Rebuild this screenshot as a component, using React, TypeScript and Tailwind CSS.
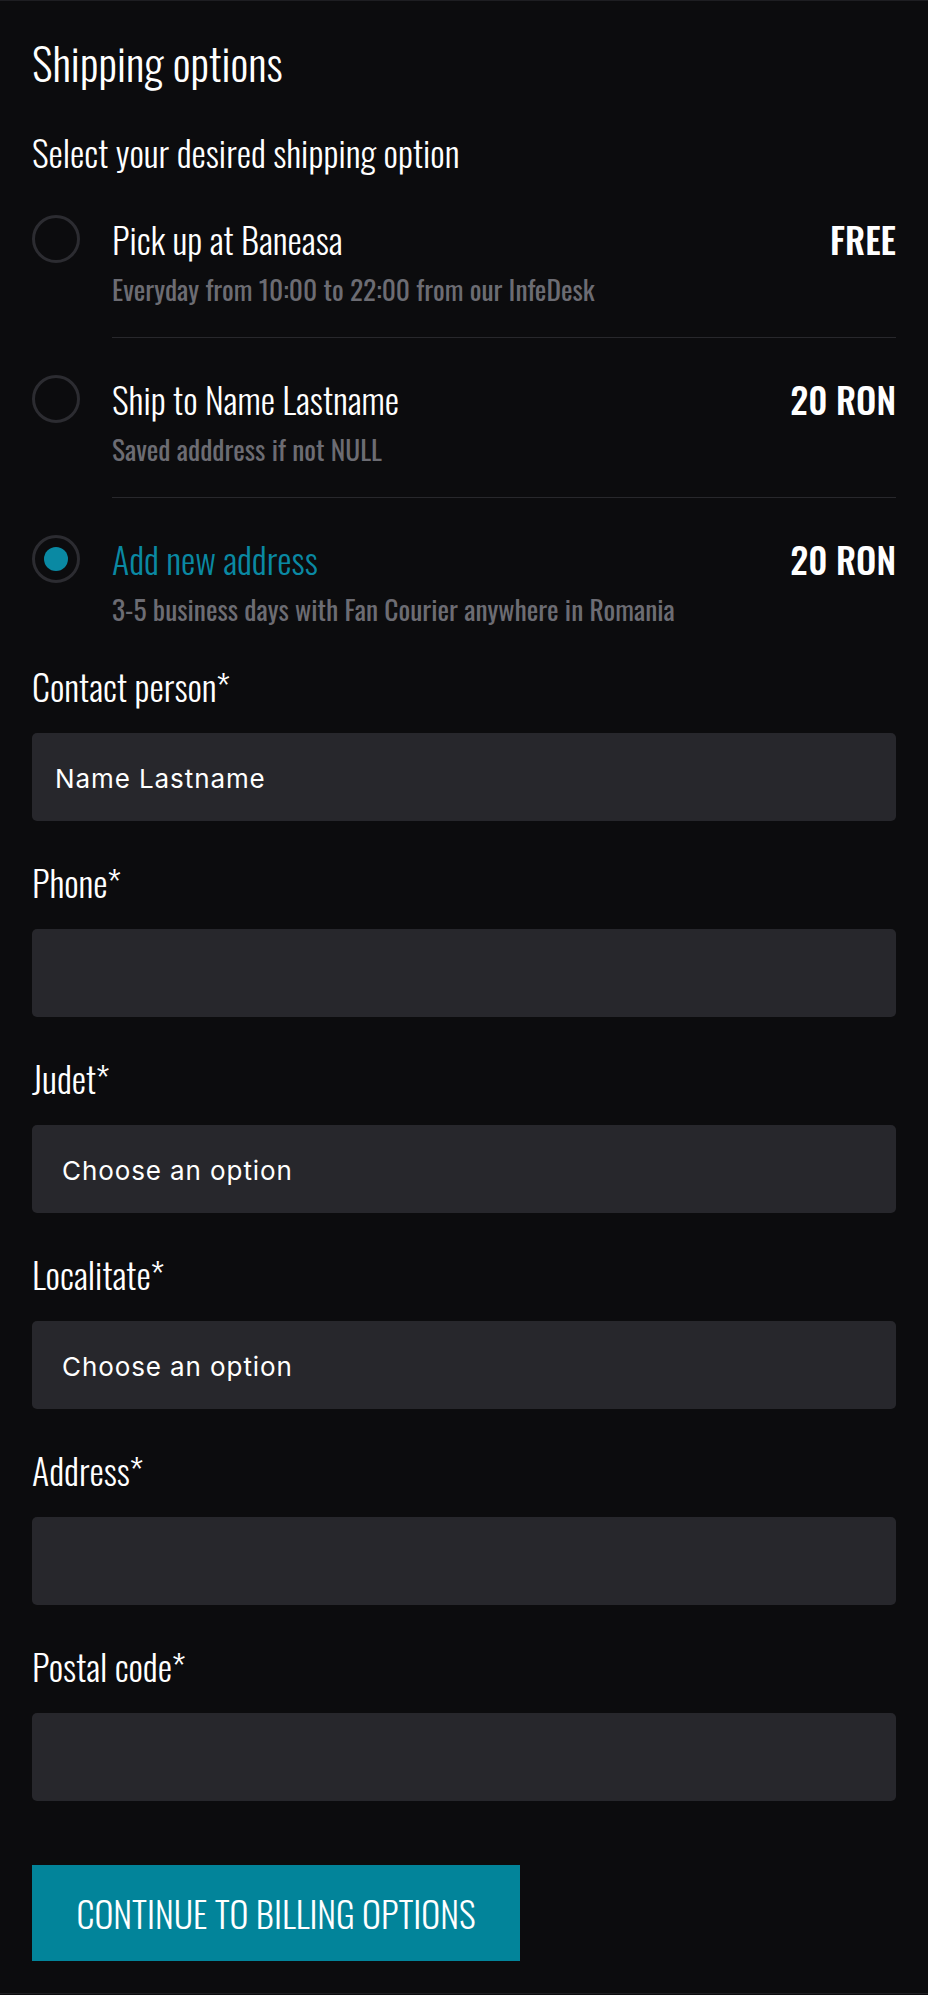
import React from "react";

type Opt = { title: string; sub: string; price: string; selected?: boolean; divider?: boolean };

const options: Opt[] = [
  { title: "Pick up at Baneasa", sub: "Everyday from 10:00 to 22:00 from our InfeDesk", price: "FREE", divider: true },
  { title: "Ship to Name Lastname", sub: "Saved adddress if not NULL", price: "20 RON", divider: true },
  { title: "Add new address", sub: "3-5 business days with Fan Courier anywhere in Romania", price: "20 RON", selected: true },
];

function Radio({ selected }: { selected?: boolean }) {
  return (
    <div className="w-[48px] h-[48px] shrink-0 rounded-full border-[3px] border-[#2c2c31] flex items-center justify-center">
      {selected && <div className="w-[24px] h-[24px] rounded-full bg-[#0a89a3]" />}
    </div>
  );
}

function Field({ label, value, select }: { label: string; value?: string; select?: boolean }) {
  return (
    <div className="flex flex-col">
      <div className="text-[36px] leading-[40px] font-light text-white">{label}</div>
      <div
        className={`mt-[27px] h-[88px] rounded-[5px] bg-[#27272c] flex items-center pt-[3px] font-['Inter',sans-serif] text-[26px] tracking-[0.035em] text-white ${
          select ? "pl-[30px]" : "pl-[23px]"
        }`}
      >
        {value}
      </div>
    </div>
  );
}

export default function App() {
  return (
    <div className="bg-[#0c0c0e] min-h-[1995px]">
      <div className="bg-[#0c0c0e] border-y border-[#1e1e22] font-['Oswald',sans-serif] text-white px-[32px] pt-[33px] pb-[32px]">
        <h1 className="text-[44.5px] leading-[56px] font-light">Shipping options</h1>
        <p className="mt-[42px] text-[36px] leading-[40px] font-light">Select your desired shipping option</p>

        <div className="mt-[43px] flex flex-col gap-[37px]">
          {options.map((o) => (
            <div key={o.title} className="flex items-start gap-[32px]">
              <Radio selected={o.selected} />
              <div className={`flex-1 flex flex-col ${o.divider ? "pb-[32px] border-b border-[#28282c]" : ""}`}>
                <div className="mt-[4px] flex items-start justify-between">
                  <span className={`text-[36px] leading-[40px] font-light ${o.selected ? "text-[#0a89a3]" : "text-white"}`}>
                    {o.title}
                  </span>
                  <span className="text-[36px] leading-[40px] font-medium">{o.price}</span>
                </div>
                <div className="mt-[14px] text-[27.5px] leading-[32px] font-normal text-[#6c6c73]">{o.sub}</div>
              </div>
            </div>
          ))}
        </div>

        <div className="mt-[41px] flex flex-col gap-[41px]">
          <Field label="Contact person*" value="Name Lastname" />
          <Field label="Phone*" />
          <Field label="Judet*" value="Choose an option" select />
          <Field label="Localitate*" value="Choose an option" select />
          <Field label="Address*" />
          <Field label="Postal code*" />
        </div>

        <button className="mt-[64px] w-[488px] h-[96px] bg-[#02849a] flex items-center justify-center text-[36px] leading-[40px] font-light uppercase text-white">
          Continue to billing options
        </button>
      </div>
    </div>
  );
}
